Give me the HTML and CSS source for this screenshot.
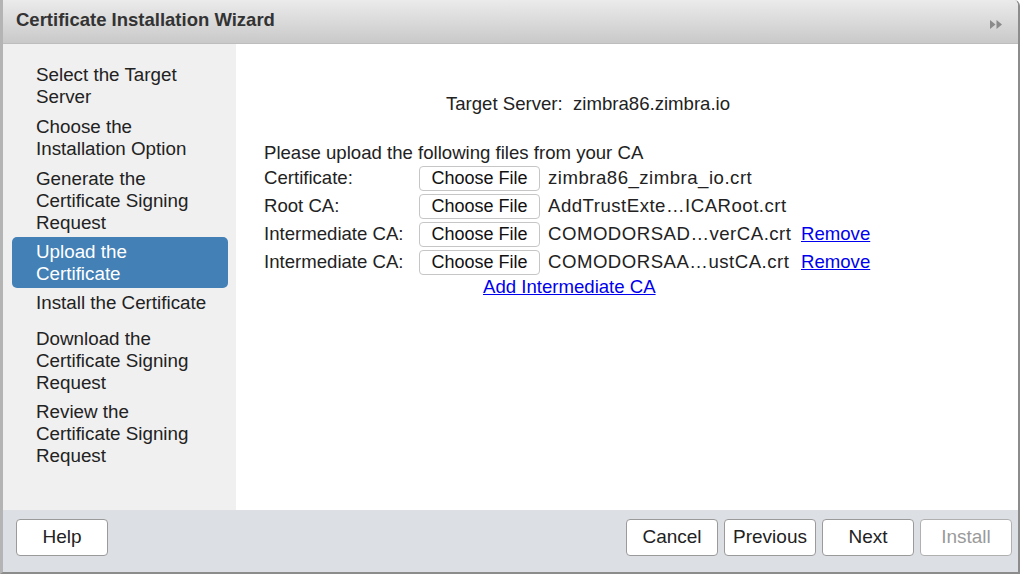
FILE: index.html
```html
<!DOCTYPE html>
<html>
<head>
<meta charset="utf-8">
<link rel="stylesheet" href="styles.css">
</head>
<body>
<div class="dialog">
  <div class="titlebar">
    <span class="title">Certificate Installation Wizard</span>
    <svg class="collapse" width="13" height="11" viewBox="0 0 13 11"><polygon points="0,1 5.5,5.5 0,10" fill="#8a8a8a"/><polygon points="6.5,1 12,5.5 6.5,10" fill="#8a8a8a"/></svg>
  </div>
  <div class="main">
    <div class="sidebar">
      <div class="step">Select the Target<br>Server</div>
      <div class="step">Choose the<br>Installation Option</div>
      <div class="step before-active">Generate the<br>Certificate Signing<br>Request</div>
      <div class="step active">Upload the<br>Certificate</div>
      <div class="step single">Install the Certificate</div>
      <div class="step after-single">Download the<br>Certificate Signing<br>Request</div>
      <div class="step">Review the<br>Certificate Signing<br>Request</div>
    </div>
    <div class="content">
      <div class="target">Target Server:&nbsp; zimbra86.zimbra.io</div>
      <div class="uploads">
        <div class="intro">Please upload the following files from your CA</div>
        <div class="row"><span class="label">Certificate:</span><span class="choose">Choose File</span><span class="fname">zimbra86_zimbra_io.crt</span></div>
        <div class="row"><span class="label">Root CA:</span><span class="choose">Choose File</span><span class="fname">AddTrustExte…ICARoot.crt</span></div>
        <div class="row"><span class="label">Intermediate CA:</span><span class="choose">Choose File</span><span class="fname">COMODORSAD…verCA.crt</span><a class="link" href="#">Remove</a></div>
        <div class="row"><span class="label">Intermediate CA:</span><span class="choose">Choose File</span><span class="fname">COMODORSAA…ustCA.crt</span><a class="link" href="#">Remove</a></div>
        <div class="addrow"><a class="link" href="#">Add Intermediate CA</a></div>
      </div>
    </div>
  </div>
  <div class="footer">
    <button class="btn">Help</button>
    <div class="spacer"></div>
    <button class="btn">Cancel</button>
    <button class="btn">Previous</button>
    <button class="btn">Next</button>
    <button class="btn disabled">Install</button>
  </div>
</div>
</body>
</html>
```
FILE: styles.css
```css
html, body {
  margin: 0;
  padding: 0;
  background: #ffffff;
}
body {
  font-family: "Liberation Sans", Arial, sans-serif;
  color: #222;
  width: 1024px;
  height: 577px;
  overflow: hidden;
}
.dialog {
  width: 1015px;
  height: 572px;
  border-left: 3px solid #b4b4b4;
  border-right: 2px solid #8c8c8c;
  border-bottom: 2px solid #8c8c8c;
  border-top-right-radius: 6px;
  display: flex;
  flex-direction: column;
  overflow: hidden;
}
.titlebar {
  height: 44px;
  flex: none;
  box-sizing: border-box;
  background: linear-gradient(#ebebeb, #c9c9c9);
  border-bottom: 1px solid #bdbdbd;
  display: flex;
  align-items: center;
  padding: 0 15px 0 13px;
}
.title {
  font-weight: bold;
  font-size: 18.5px;
  color: #333;
  flex: 1;
  margin-top: -4px;
}
.collapse {
  margin-top: 6px;
}
.main {
  flex: 1;
  display: flex;
  min-height: 0;
}
.sidebar {
  width: 233px;
  flex: none;
  background: #f0f0f0;
  padding: 20px 8px 0 9px;
  box-sizing: border-box;
}
.step {
  font-size: 18.8px;
  line-height: 22px;
  color: #222;
  padding-left: 24px;
  margin-bottom: 8px;
}
.step.before-active {
  margin-bottom: 3px;
}
.step.active {
  background: #4380b6;
  color: #fff;
  border-radius: 5px;
  padding: 4px 0 3px 24px;
  margin-bottom: 4px;
}
.step.single {
  margin-bottom: 14px;
}
.step.after-single {
  margin-bottom: 7px;
}
.content {
  flex: 1;
  background: #fff;
  padding-top: 49px;
}
.target {
  font-size: 18.6px;
  line-height: 22px;
  text-align: center;
  color: #222;
  padding-right: 78px;
}
.uploads {
  margin-top: 27px;
  padding-left: 28px;
  font-size: 18.6px;
  color: #222;
}
.intro {
  line-height: 22px;
}
.row {
  display: flex;
  align-items: center;
  height: 28px;
}
.label {
  width: 155px;
  flex: none;
}
.choose {
  width: 121px;
  height: 25px;
  box-sizing: border-box;
  border: 1px solid #c6c6c6;
  border-radius: 4px;
  background: #fff;
  font-size: 18px;
  display: flex;
  align-items: center;
  justify-content: center;
  color: #111;
  margin-right: 8px;
}
.fname {
  width: 253px;
  flex: none;
  white-space: nowrap;
  letter-spacing: 0.5px;
}
.link {
  color: #0000ee;
  text-decoration: underline;
}
.addrow {
  padding-left: 219px;
  line-height: 22px;
  margin-top: 0;
}
.footer {
  height: 62px;
  flex: none;
  box-sizing: border-box;
  background: #dcdfe4;
  display: flex;
  align-items: center;
  padding: 0 6px 8px 13px;
  gap: 6px;
}
.spacer {
  flex: 1;
}
.btn {
  width: 92px;
  height: 37px;
  background: #fff;
  border: 1px solid #9a9a9a;
  border-radius: 4px;
  font-family: "Liberation Sans", Arial, sans-serif;
  font-size: 19px;
  color: #222;
  padding: 0;
}
.btn.disabled {
  color: #9a9a9a;
  border-color: #b0b0b0;
}
```
